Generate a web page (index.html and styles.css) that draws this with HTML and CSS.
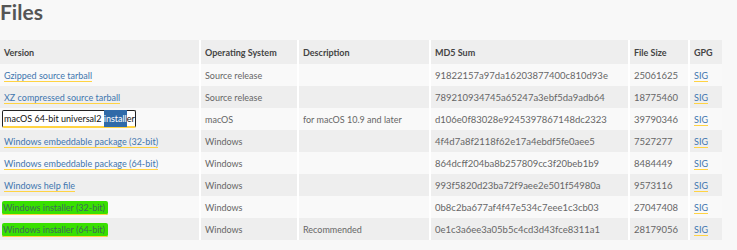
FILE: index.html
```html
<!DOCTYPE html>
<html lang="en">
<head>
    <meta charset="UTF-8">
    <meta name="viewport" content="width=device-width, initial-scale=1.0">
    <title>Files</title>
    <link rel="stylesheet" href="styles.css">
</head>
<body>

    <h1 class="page-title">Files</h1>

    <!-- Download table -->
    <table class="files-table">
        <colgroup>
            <col class="col-version">
            <col class="col-os">
            <col class="col-desc">
            <col class="col-md5">
            <col class="col-size">
            <col class="col-gpg">
        </colgroup>
        <thead>
            <tr>
                <th>Version</th>
                <th>Operating System</th>
                <th>Description</th>
                <th>MD5 Sum</th>
                <th>File Size</th>
                <th>GPG</th>
            </tr>
        </thead>
        <tbody>
            <tr>
                <td><a href="#">Gzipped source tarball</a></td>
                <td>Source release</td>
                <td></td>
                <td class="num">91822157a97da16203877400c810d93e</td>
                <td class="num">25061625</td>
                <td><a href="#">SIG</a></td>
            </tr>
            <tr>
                <td><a href="#">XZ compressed source tarball</a></td>
                <td>Source release</td>
                <td></td>
                <td class="num">789210934745a65247a3ebf5da9adb64</td>
                <td class="num">18775460</td>
                <td><a href="#">SIG</a></td>
            </tr>
            <tr>
                <td><a href="#" class="focused">macOS 64-bit universal2 <span class="selected">install</span>er</a></td>
                <td>macOS</td>
                <td>for macOS 10.9 and later</td>
                <td class="num">d106e0f83028e9245397867148dc2323</td>
                <td class="num">39790346</td>
                <td><a href="#">SIG</a></td>
            </tr>
            <tr>
                <td><a href="#">Windows embeddable package (32-bit)</a></td>
                <td>Windows</td>
                <td></td>
                <td class="num">4f4d7a8f2118f62e17a4ebdf5fe0aee5</td>
                <td class="num">7527277</td>
                <td><a href="#">SIG</a></td>
            </tr>
            <tr>
                <td><a href="#">Windows embeddable package (64-bit)</a></td>
                <td>Windows</td>
                <td></td>
                <td class="num">864dcff204ba8b257809cc3f20beb1b9</td>
                <td class="num">8484449</td>
                <td><a href="#">SIG</a></td>
            </tr>
            <tr>
                <td><a href="#">Windows help file</a></td>
                <td>Windows</td>
                <td></td>
                <td class="num">993f5820d23ba72f9aee2e501f54980a</td>
                <td class="num">9573116</td>
                <td><a href="#">SIG</a></td>
            </tr>
            <tr>
                <td><a href="#" class="marked">Windows installer (32-bit)</a></td>
                <td>Windows</td>
                <td></td>
                <td class="num">0b8c2ba677af4f47e534c7eee1c3cb03</td>
                <td class="num">27047408</td>
                <td><a href="#">SIG</a></td>
            </tr>
            <tr>
                <td><a href="#" class="marked">Windows installer (64-bit)</a></td>
                <td>Windows</td>
                <td>Recommended</td>
                <td class="num">0e1c3a6ee3a05b5c4cd3d43fce8311a1</td>
                <td class="num">28179056</td>
                <td><a href="#">SIG</a></td>
            </tr>
        </tbody>
    </table>

</body>
</html>
```

FILE: styles.css
```css
/* General Reset */
* {
    margin: 0;
    padding: 0;
    box-sizing: border-box;
}

body {
    background: #f8f8f8;
    color: #666;
    font-family: "Lato", "Liberation Sans", sans-serif;
    font-size: 9px;
}

/* Title */
.page-title {
    font-size: 21px;
    line-height: 23px;
    font-weight: bold;
    color: #555;
    margin-bottom: 17px;
}

/* Table */
.files-table {
    width: 722px;
    table-layout: fixed;
    border-collapse: collapse;
}

.col-version { width: 200px; }
.col-os { width: 98px; }
.col-desc { width: 132px; }
.col-md5 { width: 199px; }
.col-size { width: 60px; }
.col-gpg { width: 33px; }

th, td {
    text-align: left;
    padding: 0 4px;
    white-space: nowrap;
    overflow: visible;
    border-left: 2px solid #fff;
}

th:first-child, td:first-child {
    border-left: none;
}

th {
    height: 24px;
    background: #eeeeee;
    color: #444;
    font-weight: bold;
}

td {
    height: 22px;
    background: #f9f9f9;
}

td.num {
    font-size: 9.5px;
}

tbody tr:nth-child(even) td {
    background: #eeeeee;
}

/* Links */
a {
    color: #3f76ae;
    text-decoration: none;
    border-bottom: 1px solid #ffd343;
}

/* Focused link with selected word */
.focused {
    display: inline-block;
    color: #111;
    background: #fff;
    border: 1px solid #222;
    border-bottom: 2px solid #ffd343;
    border-radius: 2px;
    padding: 2px 0 2px 1px;
    margin-left: -2px;
}

.selected {
    background: #2f6aa8;
    color: #fff;
    padding: 3px 0;
}

/* Green marker highlight */
.marked {
    background: #38e000;
    color: #3d6a5a;
    border-radius: 2px;
    padding: 1px 3px 1px 1px;
    margin-left: -2px;
}
```
